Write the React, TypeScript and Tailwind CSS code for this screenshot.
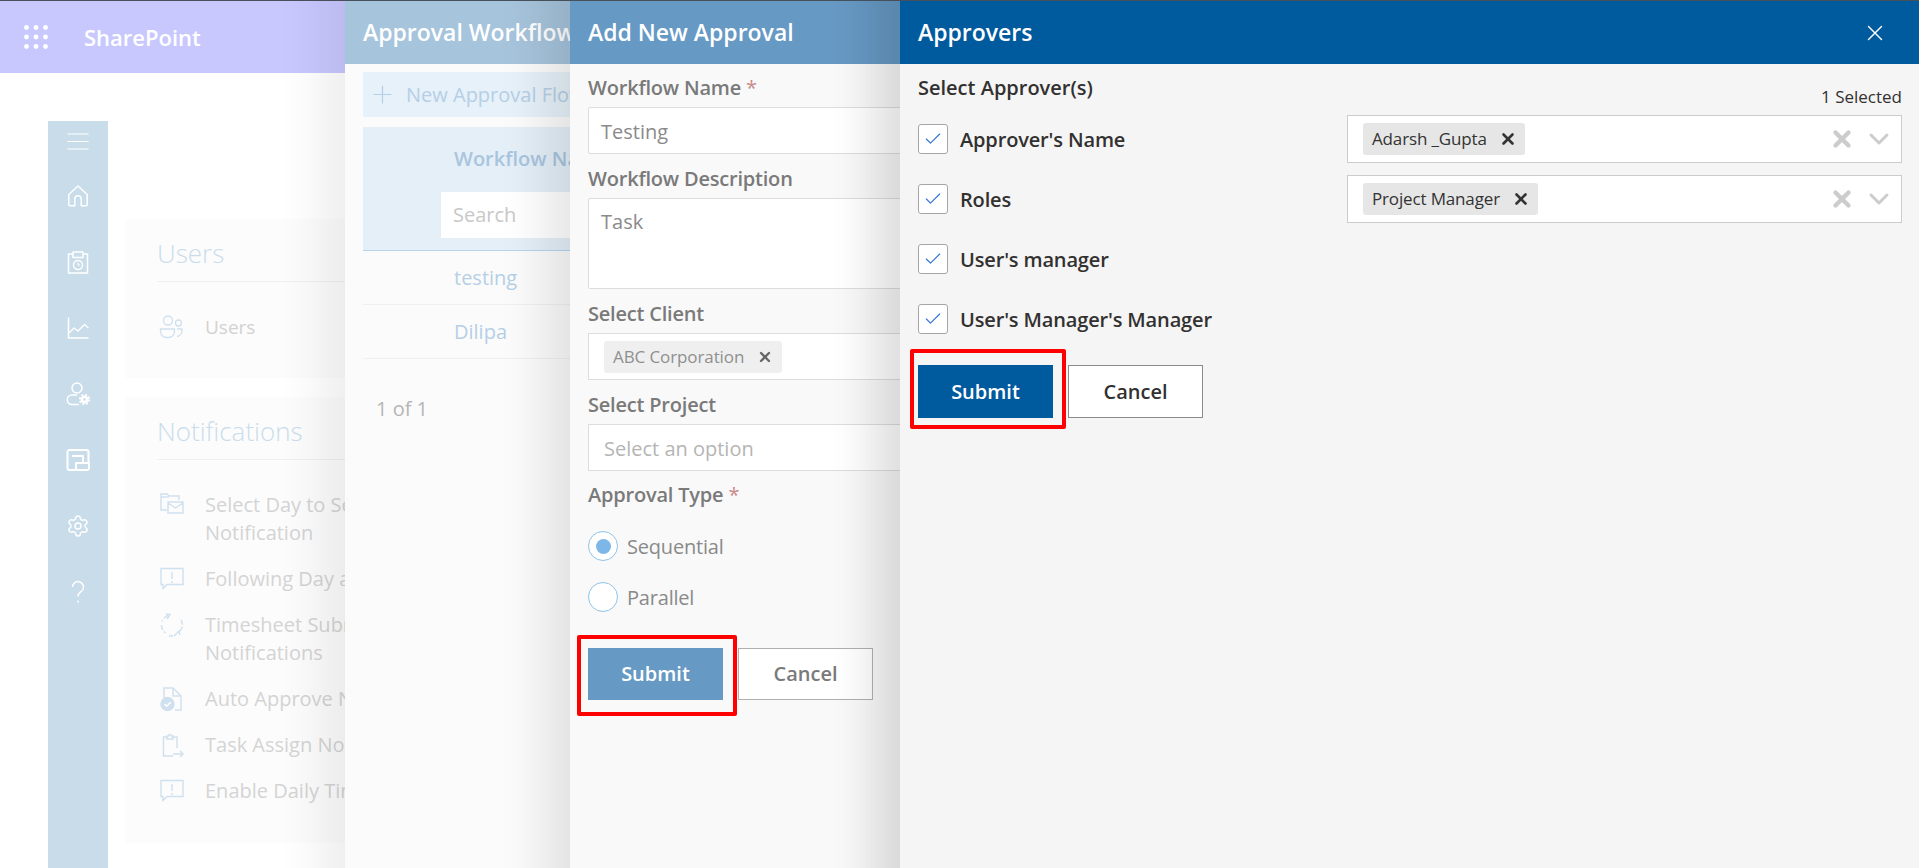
import { Check, ChevronDown, Plus, Settings, X } from "lucide-react";

const font = "font-['Open_Sans','Noto_Sans',sans-serif]";

function Grid() {
  const dots = [0, 1, 2, 3, 4, 5, 6, 7, 8];
  return (
    <svg width="24" height="24" viewBox="0 0 24 24" fill="white">
      {dots.map((d) => (
        <circle key={d} cx={2.5 + (d % 3) * 9.5} cy={2.5 + Math.floor(d / 3) * 9.5} r="2.4" />
      ))}
    </svg>
  );
}

function RailIcon({ children }: { children: React.ReactNode }) {
  return (
    <svg width="24" height="24" viewBox="0 0 24 24" fill="none" stroke="white" strokeWidth="1.5" strokeLinejoin="round">
      {children}
    </svg>
  );
}

const rail = [
  <div key="menu" className="-mb-[11px]">
    <RailIcon>
      <path d="M1.500 5h21M1.500 12.500h21M1.500 20h21" strokeWidth="1.200" />
    </RailIcon>
  </div>,
  <RailIcon key="home">
    <path d="M12 2 2.800 10.500V20.500a1.200 1.200 0 0 0 1.200 1.200h4.800V15a3.200 3.200 0 0 1 6.400 0v6.700H20a1.200 1.200 0 0 0 1.200-1.200V10.500z" />
  </RailIcon>,
  <RailIcon key="time">
    <path d="M7 4H2.500v19h19V4H17M7 2h10v5.500H7z" />
    <circle cx="12" cy="15" r="4.500" />
    <path d="M12 12.500V15h2" strokeWidth="1" />
  </RailIcon>,
  <RailIcon key="chart">
    <path d="M2.500 1.500v20.500H22.500" />
    <path d="M3 17l5-5 4 3 6.500-6.500 4 3.500" strokeWidth="1.300" />
  </RailIcon>,
  <RailIcon key="user">
    <circle cx="11" cy="6" r="5" />
    <path d="M11 13H6a4.500 4.500 0 0 0 0 9.500h7" />
    <circle cx="18.500" cy="17.500" r="3.800" fill="white" stroke="none" />
    <circle cx="18.500" cy="17.500" r="4.600" strokeDasharray="2 1.600" strokeWidth="2" />
    <circle cx="18.500" cy="17.500" r="1.300" fill="#c9dcea" stroke="none" />
  </RailIcon>,
  <RailIcon key="layout">
    <path d="M10 22H3.500a2 2 0 0 1-2-2V4a2 2 0 0 1 2-2h17a2 2 0 0 1 2 2v11" strokeWidth="2" />
    <path d="M6 8h11v7" strokeWidth="2" />
    <path d="M10 15h13v5a2 2 0 0 1-2 2H12a2 2 0 0 1-2-2z" strokeWidth="2" />
  </RailIcon>,
  <Settings key="gear" size={24} strokeWidth={1.500} className="text-white" />,
  <RailIcon key="help">
    <path d="M6.500 7a5.500 5.500 0 1 1 8.500 4.700C13 13 12 14 12 16.500" strokeWidth="1.400" />
    <circle cx="12" cy="21.500" r="1" fill="white" stroke="none" />
  </RailIcon>,
];

function NoteIcon({ children }: { children: React.ReactNode }) {
  return (
    <svg width="24" height="24" viewBox="0 0 24 24" fill="none" stroke="#cfe0ef" strokeWidth="1.400" className="shrink-0 mt-[2px]">
      {children}
    </svg>
  );
}

const Bubble = (
  <NoteIcon>
    <path d="M1 1.500h22v16H7l-4 4v-4H1z" />
    <path d="M12 5v7M12 14v2" />
  </NoteIcon>
);

const notifications = [
  {
    lines: ["Select Day to Send", "Notification"],
    icon: (
      <NoteIcon>
        <path d="M7 17H1V1h6l2 2h10v4" />
        <path d="M1 4h8" />
        <path d="M8 9h15v11H8zM8 10l7.500 5L23 10" />
      </NoteIcon>
    ),
  },
  { lines: ["Following Day after"], icon: Bubble },
  {
    lines: ["Timesheet Submission", "Notifications"],
    icon: (
      <NoteIcon>
        <path d="M8 2.500a10.500 10.500 0 0 0-6 6M1.500 12a10 10 0 0 0 4 8M9 23h4M20 18a10 10 0 0 0 2.500-6 10 10 0 0 0-3-7" strokeDasharray="5 2" />
        <path d="M7 6l3-4.500L6 1M14 23l5-5 1 4" />
      </NoteIcon>
    ),
  },
  {
    lines: ["Auto Approve Notification"],
    icon: (
      <NoteIcon>
        <path d="M4 11V1h9l8 8v14h-6M13 1v8h8" />
        <circle cx="7.500" cy="17" r="6.500" fill="#cfe0ef" />
        <path d="M4.500 17l2.200 2.200 4-4" stroke="white" strokeWidth="1.600" />
      </NoteIcon>
    ),
  },
  {
    lines: ["Task Assign Notification"],
    icon: (
      <NoteIcon>
        <path d="M8 4H3.500v19H13M17 15V4h-5" />
        <path d="M8 6V3h1.500a1.500 1.500 0 0 1 3 0H14v3z" transform="translate(-1 0)" />
        <path d="M13 21h10M20 18l3 3-3 3" />
      </NoteIcon>
    ),
  },
  { lines: ["Enable Daily Timesheet"], icon: Bubble },
];

function Field({ label, required, children }: { label: string; required?: boolean; children: React.ReactNode }) {
  return (
    <div className="flex flex-col">
      <div className="h-[43px] pt-[4px] flex items-center text-[20px] font-semibold text-[#7a7a7a] tracking-[-0.2px]">
        {label}
        {required && <span className="ml-[5px] font-normal text-[#c98a8a]">*</span>}
      </div>
      {children}
    </div>
  );
}

function Radio({ label, checked }: { label: string; checked?: boolean }) {
  return (
    <div className="flex items-center gap-[9px] h-[30px]">
      <span className="w-[30px] h-[30px] rounded-full bg-white border border-[#8fc3ea] flex items-center justify-center">
        {checked && <span className="w-[15px] h-[15px] rounded-full bg-[#7db7e8]" />}
      </span>
      <span className="pt-[2px] text-[20px] text-[#8a8a8a] tracking-[-0.2px]">{label}</span>
    </div>
  );
}

function Chip({ label }: { label: string }) {
  return (
    <span className="h-[32px] pl-[9px] pr-[8px] rounded-[3px] bg-[#e6e6e6] flex items-center gap-[12px] text-[17px] text-[#333] tracking-[-0.15px]">
      {label}
      <X size={18} strokeWidth={3.500} className="text-[#333]" />
    </span>
  );
}

function ApproverRow({ label, chip }: { label: string; chip?: string }) {
  return (
    <div className="h-[60px] flex items-center">
      <span className="w-[30px] h-[30px] rounded-[3px] bg-white border border-[#a6a6a6] flex items-center justify-center">
        <Check size={20} strokeWidth={1.300} className="text-[#2f6fd6]" />
      </span>
      <span className="ml-[12px] w-[387px] pt-[2px] text-[20px] font-semibold text-[#323130] tracking-[-0.15px]">{label}</span>
      {chip && (
        <div className="w-[555px] h-[48px] bg-white border border-[#cccccc] pl-[15px] pr-[6px] flex items-center justify-between">
          <Chip label={chip} />
          <div className="flex items-center gap-[8px] text-[#cccccc]">
            <X size={26} strokeWidth={4} />
            <ChevronDown size={32} strokeWidth={2.200} />
          </div>
        </div>
      )}
    </div>
  );
}

export default function App() {
  return (
    <div className={`relative w-[1919px] h-[868px] overflow-hidden bg-white ${font}`}>
      {/* page underneath */}
      <div className="h-[73px] bg-[#c8c8ff] flex items-center pl-[24px] pt-[1px]">
        <Grid />
        <span className="ml-[36px] text-[22px] font-semibold text-white">SharePoint</span>
      </div>
      <div className="flex h-[795px] pt-[48px] pl-[48px]">
        <div className="w-[60px] bg-[#c9dcea] flex flex-col items-center gap-[42px] pt-[8px]">
          {rail.map((icon) => icon)}
        </div>
        <div className="ml-[18px] w-[400px] flex flex-col gap-[19px] pt-[98px]">
          <div className="h-[159px] bg-[#fcfcfc] px-[31px] pt-[15px]">
            <div className="text-[26px] font-light text-[#c9dcec] pb-[8px] border-b border-[#f0f0f0]">Users</div>
            <div className="flex items-center mt-[31px]">
              <svg width="24" height="24" viewBox="0 0 24 24" fill="none" stroke="#cfe0ef" strokeWidth="1.300" className="ml-[2px]">
                <circle cx="9" cy="5.500" r="4.500" />
                <circle cx="19.500" cy="8" r="3" />
                <path d="M1.500 14h14v2.500a6 6 0 0 1-6 6h-2a6 6 0 0 1-6-6z" />
                <path d="M18 14h5v1.500a6 6 0 0 1-5 6" />
              </svg>
              <span className="ml-[22px] text-[19px] text-[#d2d2d2]">Users</span>
            </div>
          </div>
          <div className="h-[446px] bg-[#fcfcfc] px-[31px] pt-[15px]">
            <div className="text-[26px] font-light text-[#c9dcec] pb-[8px] border-b border-[#f0f0f0]">Notifications</div>
            <div className="flex flex-col gap-[18px] mt-[31px]">
              {notifications.map((n) => (
                <div key={n.lines[0]} className="flex whitespace-nowrap">
                  <span className="ml-[3px]">{n.icon}</span>
                  <div className="ml-[21px] text-[20px] leading-[28px] text-[#d4d4d4]">
                    {n.lines.map((l) => (
                      <div key={l}>{l}</div>
                    ))}
                  </div>
                </div>
              ))}
            </div>
          </div>
        </div>
      </div>

      {/* Approval Workflow panel, runs past the window so its shadow stays even */}
      <div className="absolute left-[345px] right-0 -top-[100px] -bottom-[100px] pt-[101px] bg-[#fbfbfb] shadow-[-25px_0_45px_rgba(0,0,0,0.07)]">
        <div className="h-[63px] bg-[#a6c4dc] pl-[18px] flex items-center text-[23px] font-semibold text-white whitespace-nowrap">
          Approval Workflow
        </div>
        <div className="pl-[18px] pt-[8px]">
          <div className="h-[45px] w-[300px] bg-[#e6f1f9] flex items-center pl-[5px] text-[#b6cfe6]">
            <Plus size={29} strokeWidth={1} />
            <span className="ml-[9px] text-[20px] whitespace-nowrap">New Approval Flow</span>
          </div>
          <div className="mt-[10px] h-[124px] w-[300px] bg-[#e4eff8] border-b border-[#b5d4ee] pl-[91px] pt-[17px]">
            <div className="text-[20px] font-semibold text-[#a9c5de] whitespace-nowrap">Workflow Name</div>
            <div className="mt-[18px] -ml-[13px] h-[46px] bg-white flex items-center pl-[12px] text-[20px] text-[#c8c8c8]">Search</div>
          </div>
          {["testing", "Dilipa"].map((name) => (
            <div key={name} className="h-[54px] w-[300px] border-b border-[#f0f0f0] pl-[91px] flex items-center text-[20px] text-[#b5cfe6]">
              {name}
            </div>
          ))}
          <div className="mt-[35px] ml-[13px] text-[20px] text-[#b5b5b5]">1 of 1</div>
        </div>
      </div>

      {/* Add New Approval panel */}
      <div className="absolute left-[570px] right-0 -top-[100px] -bottom-[100px] pt-[101px] bg-[#f9f9f9] shadow-[-25px_0_45px_rgba(0,0,0,0.1)]">
        <div className="h-[63px] bg-[#6699c4] pl-[18px] flex items-center text-[23px] font-semibold text-white">
          Add New Approval
        </div>
        <div className="pl-[18px] w-[330px] relative">
          <Field label="Workflow Name" required>
            <div className="w-[400px] h-[47px] bg-white border border-[#dddddd] rounded-[2px] pl-[12px] pt-[2px] flex items-center text-[20px] text-[#8a8a8a]">Testing</div>
          </Field>
          <div className="h-[1px]" />
          <Field label="Workflow Description">
            <div className="w-[400px] h-[91px] bg-white border border-[#dddddd] rounded-[2px] pl-[12px] pt-[8px] text-[20px] text-[#8a8a8a]">Task</div>
          </Field>
          <div className="h-[1px]" />
          <Field label="Select Client">
            <div className="w-[400px] h-[47px] bg-white border border-[#dddddd] pl-[15px] flex items-center">
              <span className="h-[32px] pl-[9px] pr-[9px] rounded-[3px] bg-[#efefef] flex items-center gap-[13px] text-[17px] text-[#8f8f8f] tracking-[-0.1px]">
                ABC Corporation
                <X size={16} strokeWidth={3.500} className="text-[#666]" />
              </span>
            </div>
          </Field>
          <div className="h-[1px]" />
          <Field label="Select Project">
            <div className="w-[400px] h-[47px] bg-white border border-[#dddddd] pl-[15px] pt-[2px] flex items-center text-[20px] text-[#b5b5b5]">Select an option</div>
          </Field>
          <Field label="Approval Type" required>
            <div className="flex flex-col gap-[21px] pt-[17px]">
              <Radio label="Sequential" checked />
              <Radio label="Parallel" />
            </div>
          </Field>
          <div className="flex mt-[36px] gap-[15px]">
            <div className="relative">
              <button className="w-[135px] h-[52px] bg-[#6699c4] text-white text-[20px] font-semibold">Submit</button>
              <span className="absolute -left-[11px] -right-[14px] -top-[13px] -bottom-[16px] border-4 border-[#ff0000] rounded-[2px]" />
            </div>
            <button className="w-[135px] h-[52px] bg-white border border-[#b0b0b0] text-[#7a7a7a] text-[20px] font-semibold">Cancel</button>
          </div>
        </div>
      </div>

      {/* Approvers panel */}
      <div className="absolute left-[900px] right-0 -top-[100px] -bottom-[100px] pt-[101px] bg-[#f5f5f5] shadow-[-25px_0_45px_rgba(0,0,0,0.14)]">
        <div className="h-[63px] bg-[#005a9e] pl-[18px] pr-[31px] flex items-center justify-between text-[23px] font-semibold text-white">
          Approvers
          <X size={26} strokeWidth={1.300} />
        </div>
        <div className="pl-[18px] pr-[17px]">
          <div className="h-[45px] flex justify-between">
            <span className="mt-[9px] text-[20px] font-semibold text-[#323130]">Select Approver(s)</span>
            <span className="mt-[20px] text-[17px] text-[#323130]">1 Selected</span>
          </div>
          <ApproverRow label="Approver's Name" chip="Adarsh _Gupta" />
          <ApproverRow label="Roles" chip="Project Manager" />
          <ApproverRow label="User's manager" />
          <ApproverRow label="User's Manager's Manager" />
          <div className="flex mt-[16px] gap-[15px]">
            <div className="relative">
              <button className="w-[135px] h-[53px] bg-[#005a9e] text-white text-[20px] font-semibold">Submit</button>
              <span className="absolute -left-[8px] -right-[13px] -top-[16px] -bottom-[11px] border-4 border-[#ff0000] rounded-[2px]" />
            </div>
            <button className="w-[135px] h-[53px] bg-white border border-[#8a8a8a] text-[#323130] text-[20px] font-semibold">Cancel</button>
          </div>
        </div>
      </div>

      {/* dark hairline along the top of the window */}
      <div className="absolute inset-x-0 top-0 h-[1px] bg-[#46505a]" />
    </div>
  );
}
